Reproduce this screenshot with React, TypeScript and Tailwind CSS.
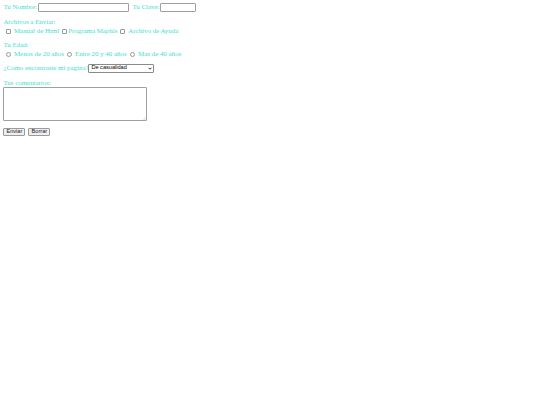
import React from "react";

const txt = "text-[#40e0d0] text-[6.9px] leading-none whitespace-nowrap";

function Box() {
  return <span className="inline-block w-[5px] h-[5px] border-[0.5px] border-[#9a9a9a] rounded-[1px] bg-white" />;
}
function Radio() {
  return <span className="inline-block w-[5px] h-[5px] border-[0.5px] border-[#9a9a9a] rounded-full bg-white" />;
}

export default function App() {
  return (
    <div
      className="w-[540px] h-[405px] bg-white flex flex-col px-[3.4px] pt-[3px]"
      style={{ fontFamily: '"Liberation Serif", "Times New Roman", serif' }}
    >
      {/* Row 1 */}
      <div className="flex items-center h-[9px]">
        <span className={`${txt} w-[35px]`}>Tu Nombre:</span>
        <span className="w-[91px] h-[9px] border-[0.6px] border-[#a0a0a0] rounded-[1px] bg-white" />
        <span className={`${txt} ml-[3px] w-[28px]`}>Tu Clave:</span>
        <span className="w-[36px] h-[9px] border-[0.6px] border-[#a0a0a0] rounded-[1px] bg-white" />
      </div>

      {/* Row 2 */}
      <div className="flex items-center h-[8px] mt-[6px]">
        <span className={txt}>Archivos a Enviar:</span>
      </div>

      {/* Row 3 */}
      <div className="flex items-center h-[8px] mt-[1px]">
        <span className="ml-[2.6px] flex"><Box /></span>
        <span className={`${txt} ml-[3px]`}>Manual de Html</span>
        <span className="ml-[2.5px] flex"><Box /></span>
        <span className={`${txt} ml-[1.5px]`}>Programa Maphis</span>
        <span className="ml-[3px] flex"><Box /></span>
        <span className={`${txt} ml-[3px]`}>Archivo de Ayuda</span>
      </div>

      {/* Row 4 */}
      <div className="flex items-center h-[8px] mt-[6px]">
        <span className={txt}>Tu Edad:</span>
      </div>

      {/* Row 5 */}
      <div className="flex items-center h-[8px] mt-[1px]">
        <span className="ml-[2.6px] flex"><Radio /></span>
        <span className={`${txt} ml-[3px]`}>Menos de 20 años</span>
        <span className="ml-[3px] flex"><Radio /></span>
        <span className={`${txt} ml-[3px]`}>Entre 20 y 40 años</span>
        <span className="ml-[3px] flex"><Radio /></span>
        <span className={`${txt} ml-[3.5px]`}>Mas de 40 años</span>
      </div>

      {/* Row 6 */}
      <div className="flex items-center h-[9px] mt-[5.5px]">
        <span className={`${txt} w-[85px]`}>¿Como encontraste mi pagina?</span>
        <span
          className="flex items-center justify-between w-[66px] h-[9px] border-[0.6px] border-[#8a8a8a] rounded-[1px] bg-white pl-[2px] pr-[1.3px]"
          style={{ fontFamily: '"Liberation Sans", Arial, sans-serif' }}
        >
          <span className="text-black text-[5.6px] leading-none">De casualidad</span>
          <svg width="4" height="3" viewBox="0 0 8 5" className="mr-[0.5px]">
            <path d="M1 1 L4 4 L7 1" fill="none" stroke="#000" strokeWidth="1.6" />
          </svg>
        </span>
      </div>

      {/* Row 7 */}
      <div className="flex items-center h-[7px] mt-[7px]">
        <span className={txt}>Tus comentarios:</span>
      </div>

      {/* Textarea */}
      <div className="relative w-[144px] h-[34px] mt-[0.5px] border-[0.6px] border-[#a0a0a0] rounded-[1px] bg-white">
        <svg width="3" height="3" viewBox="0 0 6 6" className="absolute right-[0.5px] bottom-[0.5px]">
          <path d="M5.5 1 L1 5.5 M5.5 3.5 L3.5 5.5" stroke="#999" strokeWidth="0.8" />
        </svg>
      </div>

      {/* Buttons */}
      <div className="flex items-center h-[8px] mt-[7px] gap-[3px]" style={{ fontFamily: '"Liberation Sans", Arial, sans-serif' }}>
        <span className="flex items-center justify-center w-[22px] h-[8px] border-[0.6px] border-[#9a9a9a] rounded-[1px] bg-[#efefef] text-[#222] text-[5.6px] leading-none">
          Enviar
        </span>
        <span className="flex items-center justify-center w-[22px] h-[8px] border-[0.6px] border-[#9a9a9a] rounded-[1px] bg-[#efefef] text-[#222] text-[5.6px] leading-none">
          Borrar
        </span>
      </div>
    </div>
  );
}
